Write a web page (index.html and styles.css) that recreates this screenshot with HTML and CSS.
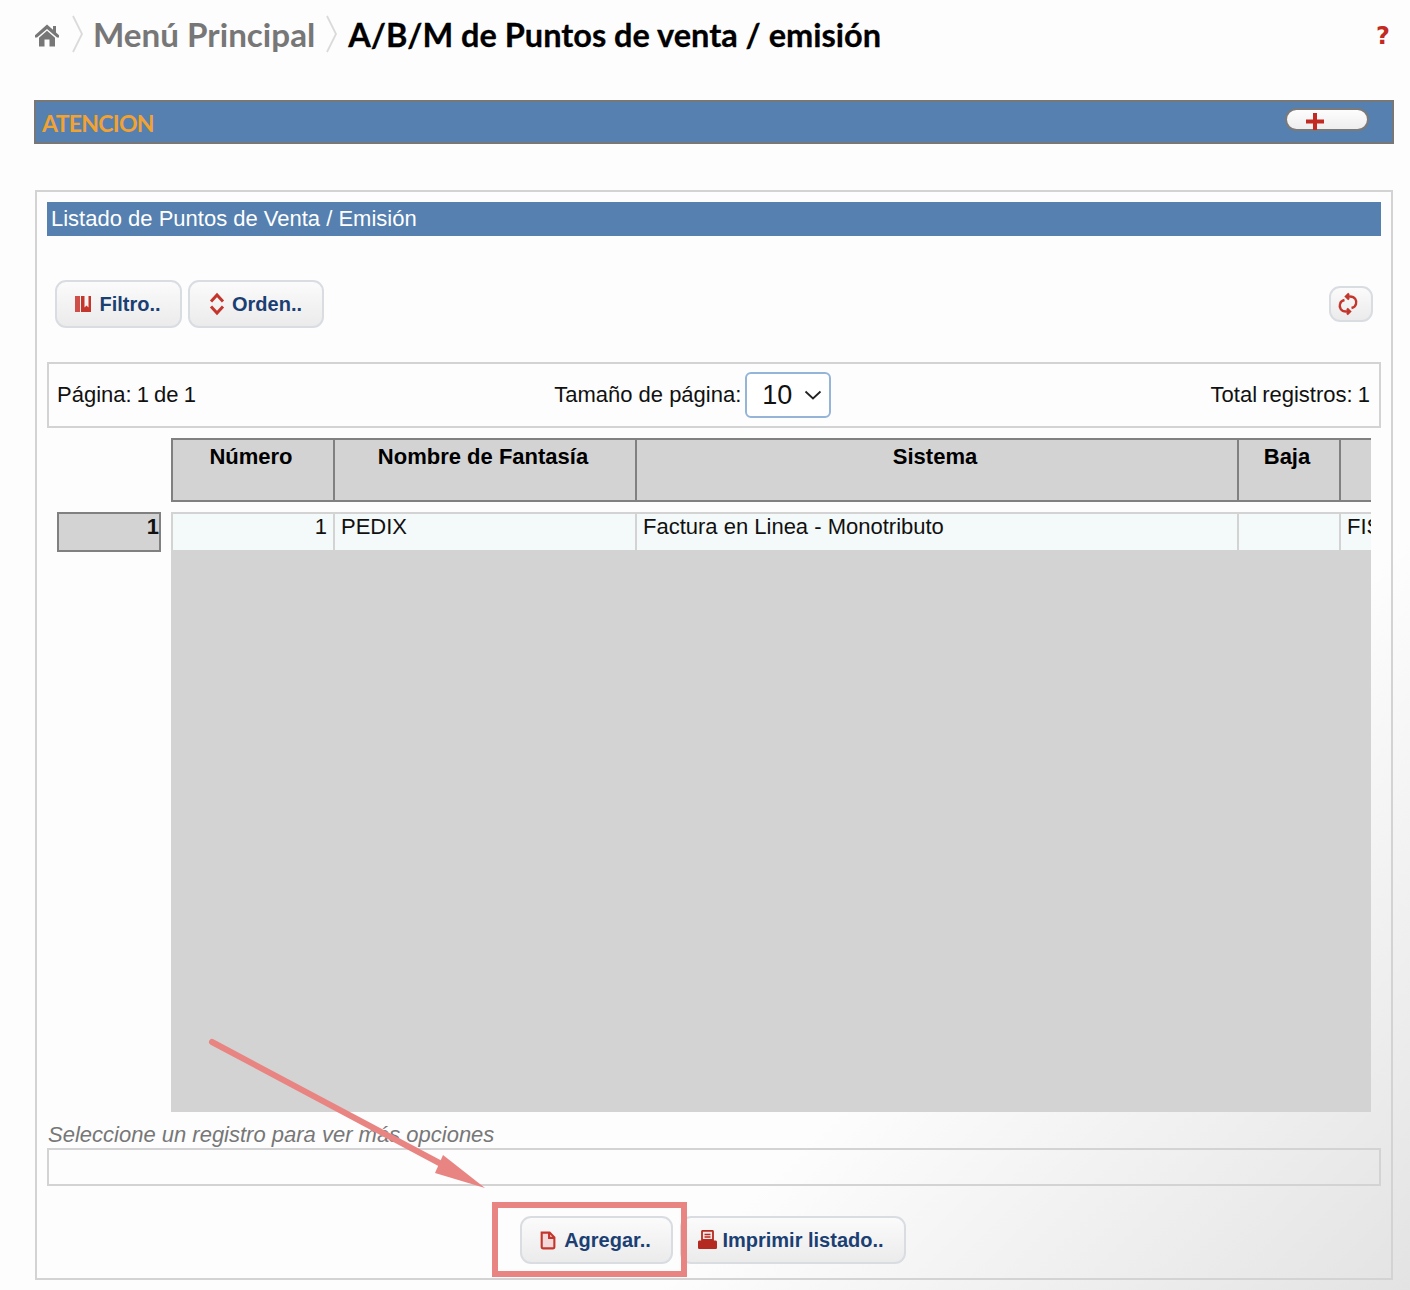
FILE: index.html
```html
<!DOCTYPE html>
<html lang="es">
<head>
<meta charset="utf-8">
<title>A/B/M de Puntos de venta / emisión</title>
<link rel="stylesheet" href="styles.css">
</head>
<body>
<div class="page">
  <header class="crumbs">
    <svg class="home" viewBox="0 0 24 23"><path d="M12 .5 18 5.800V2H21V8.500L24 11.200V13.500H22L12 5 2 13.500H0V11.200ZM4 13.800 12 6.800 20 13.800V22.500H14.500V15.500H9.500V22.500H4Z"/></svg>
    <svg class="sep" viewBox="0 0 11 38"><path d="M1 1 10 19 1 37"/></svg>
    <span class="crumb">Menú Principal</span>
    <svg class="sep" viewBox="0 0 11 38"><path d="M1 1 10 19 1 37"/></svg>
    <h1 class="title">A/B/M de Puntos de venta / emisión</h1>
    <span class="help">?</span>
  </header>

  <div class="alert">
    <span class="alert-text">ATENCION</span>
    <span class="pill"><svg class="plus" viewBox="0 0 18 17"><path d="M7 0H11V6.500H18V10.500H11V17H7V10.500H0V6.500H7Z"/></svg></span>
  </div>

  <section class="panel">
    <div class="panel-title">Listado de Puntos de Venta / Emisión</div>

    <div class="toolbar">
      <button class="btn btn-filter"><svg class="ico" viewBox="0 0 18 18"><path class="soft" d="M1 1H6V17H1Z"/><path d="M7 1H17V17H7ZM10.500 1V12.500L12.500 10.500 14.500 12.500V1Z" fill-rule="evenodd"/></svg>Filtro..</button>
      <button class="btn btn-order"><svg class="ico-line" viewBox="0 0 18 24"><path d="M3 9.500 9 3 15 9.500M3 14.500 9 21 15 14.500"/></svg>Orden..</button>
      <button class="btn btn-refresh" aria-label="Actualizar"><svg class="ico-line thin" viewBox="0 0 22 24"><path d="M12 1.500 9 4.500 12 7.500M9.500 4.500H13C18 4.500 20 8.500 19 12 18.500 14 17 15.500 14.500 16M10 22.500 13 19.500 10 16.500M12.500 19.500H9C4 19.500 2 15.500 3 12 3.500 10 5 8.500 7.500 8"/></svg></button>
    </div>

    <div class="pager">
      <span class="pager-end">Página: 1 de 1</span>
      <label class="pager-size">Tamaño de página:
        <span class="select">10<svg class="caret" viewBox="0 0 18 10"><path d="M1.500 1.500 9 8.500 16.500 1.500"/></svg></span>
      </label>
      <span class="pager-end">Total registros: 1</span>
    </div>

    <div class="grid-wrap">
      <div class="row-head-col">
        <div class="row-head">1</div>
      </div>
      <div class="grid-col">
        <div class="thead">
          <div class="th c1">Número</div>
          <div class="th c2">Nombre de Fantasía</div>
          <div class="th c3">Sistema</div>
          <div class="th c4">Baja</div>
          <div class="th c5"></div>
        </div>
        <div class="tbody">
          <div class="tr">
            <div class="td c1 num">1</div>
            <div class="td c2">PEDIX</div>
            <div class="td c3">Factura en Linea - Monotributo</div>
            <div class="td c4"></div>
            <div class="td c5">FISCAL</div>
          </div>
        </div>
      </div>
    </div>

    <p class="hint">Seleccione un registro para ver más opciones</p>
    <div class="options"></div>

    <div class="actions">
      <button class="btn btn-add"><svg class="ico-file" viewBox="0 0 16 18"><path class="file-fill" d="M2 1H10L15 6V17H2Z"/><path class="file-line" d="M2.500 1.500H10L14.500 6V15C14.500 16 14 16.500 13 16.500H4C3 16.500 2.500 16 2.500 15ZM9.500 1.500V6.500H14.500"/></svg>Agregar..</button>
      <button class="btn btn-print"><svg class="ico-print" viewBox="0 0 19 20"><path class="paper" d="M4 1.500C4 1 4.500 .8 5 .8H14C14.500 .8 15 1 15 1.500V10H4Z"/><path class="paper-line" d="M6.500 4.500H12.500M6.500 7H12.500"/><path d="M1.500 10.500H17.500C18.300 10.500 19 11 19 12V17.500C19 18.500 18.300 19 17.500 19H1.500C.7 19 0 18.500 0 17.500V12C0 11 .7 10.500 1.500 10.500Z"/></svg>Imprimir listado..</button>
    </div>
  </section>
</div>

<svg class="annotation" viewBox="0 0 1410 1290" aria-hidden="true">
  <path class="arrow-line" d="M212 1042 445 1166"/>
  <path class="arrow-head" d="M443 1155 485 1188 435 1173Z"/>
  <rect class="arrow-box" x="495" y="1205" width="189" height="69"/>
</svg>
</body>
</html>
```

FILE: styles.css
```css
* { box-sizing: border-box; }

html, body {
  margin: 0;
  height: 1290px;
  overflow: hidden;
}

body {
  position: relative;
  background: linear-gradient(135deg, #fdfdfd 72%, #e3e3e3 100%);
  font-family: "Liberation Sans", Arial, sans-serif;
  font-size: 22px;
  color: #111;
}

.page {
  padding: 0 16px 0 34px;
}

/* Breadcrumb */
.crumbs {
  display: flex;
  align-items: center;
  height: 68px;
  font-family: Lato, "Open Sans", sans-serif;
  font-weight: 700;
}

.home {
  width: 24px;
  height: 23px;
  margin: 2px 0 0 1px;
  fill: #777;
}

.sep {
  width: 11px;
  height: 40px;
  margin: 0 10px 0 13px;
  fill: none;
  stroke: #dadada;
  stroke-width: 1.800;
}

.crumb {
  font-size: 33.200px;
  color: #777;
}

.crumb + .sep {
  margin: 0 11px 0 11px;
}

.title {
  margin: 0;
  font-size: 32.500px;
  font-weight: inherit;
  color: #000;
  -webkit-text-stroke: .3px #000;
}

.help {
  margin: 4px 4px 0 auto;
  font-family: "DejaVu Sans", sans-serif;
  font-weight: 700;
  font-size: 24px;
  color: #c22a22;
}

/* Alert bar */
.alert {
  display: flex;
  align-items: flex-start;
  justify-content: space-between;
  height: 44px;
  margin-top: 32px;
  padding: 7px 23px 0 6px;
  background: #5580b0;
  border: 2px solid #777;
}

.alert-text {
  font-family: Lato, "Open Sans", sans-serif;
  font-weight: 700;
  font-size: 23px;
  letter-spacing: -.7px;
  line-height: 28px;
  color: #f2a232;
}

.pill {
  display: flex;
  justify-content: center;
  width: 84px;
  height: 23px;
  margin-top: -1px;
  padding: 3px 25px 0 0;
  border: 2px solid #7a7a7a;
  border-radius: 12px;
  background: linear-gradient(#fdfdfd, #eeeeee);
}

.plus {
  width: 18px;
  height: 17px;
  fill: #c22a22;
}

/* Panel */
.panel {
  width: 1358px;
  height: 1090px;
  margin: 46px 0 0 1px;
  padding: 10px 10px 0;
  border: 2px solid #d3d3d3;
}

.panel-title {
  height: 34px;
  padding-left: 4px;
  line-height: 34px;
  color: #fff;
  background: #5580b0;
}

/* Buttons */
.btn {
  display: inline-flex;
  align-items: center;
  justify-content: center;
  height: 48px;
  padding: 0;
  border: 2px solid #d9dde2;
  border-radius: 11px;
  background: linear-gradient(#fbfbfb, #ebebeb);
  font: 700 20px "Liberation Sans", Arial, sans-serif;
  color: #1b3f73;
}

.toolbar {
  display: flex;
  align-items: center;
  gap: 6px;
  height: 48px;
  margin: 44px 8px 0;
}

.btn-filter { width: 127px; padding-right: 2px; }
.btn-order { width: 136px; padding-right: 2px; }

.btn-refresh {
  width: 44px;
  height: 36px;
  margin-left: auto;
}

.ico {
  width: 18px;
  height: 18px;
  margin-right: 7px;
  fill: #c4362c;
}

.soft { fill: #cf5048; }

.ico-line {
  width: 18px;
  height: 24px;
  margin-right: 6px;
  fill: none;
  stroke: #c4362c;
  stroke-width: 3;
}

.ico-line.thin {
  width: 22px;
  height: 24px;
  margin: 0 6px 0 0;
  stroke-width: 2.400;
}

.ico-file {
  width: 17px;
  height: 19px;
  margin-right: 8px;
}

.file-fill { fill: #f3d9d9; }

.file-line {
  fill: none;
  stroke: #c4362c;
  stroke-width: 2;
}

.ico-print {
  width: 19px;
  height: 20px;
  margin-right: 5px;
  fill: #b52a20;
}

.paper {
  fill: #f4e6e5;
  stroke: #b52a20;
  stroke-width: 1.800;
}

.paper-line {
  fill: none;
  stroke: #b52a20;
  stroke-width: 1.500;
}

/* Pager */
.pager {
  display: flex;
  align-items: center;
  justify-content: space-between;
  height: 66px;
  margin-top: 34px;
  padding: 0 9px 0 8px;
  border: 2px solid #d3d3d3;
}

.pager-end {
  word-spacing: -1px;
}

.pager-size {
  display: flex;
  align-items: center;
  gap: 4px;
  margin-right: 21px;
}

.select {
  display: flex;
  align-items: center;
  justify-content: space-between;
  width: 86px;
  height: 46px;
  padding: 0 7px 0 15px;
  border: 2px solid #94b4d8;
  border-radius: 6px;
  background: #fff;
  font-size: 27px;
}

.caret {
  width: 18px;
  height: 10px;
  fill: none;
  stroke: #222;
  stroke-width: 1.800;
}

/* Grid */
.grid-wrap {
  display: flex;
  margin-top: 10px;
}

.row-head-col {
  width: 124px;
  padding: 74px 0 0 10px;
}

.row-head {
  width: 104px;
  height: 40px;
  border: 2px solid #808080;
  background: #d3d3d3;
  font-weight: 700;
  text-align: right;
  line-height: 25px;
}

.grid-col {
  width: 1200px;
  overflow: hidden;
}

.thead {
  display: flex;
  height: 64px;
  background: #d3d3d3;
  border-top: 2px solid #808080;
  border-bottom: 2px solid #808080;
}

.th {
  flex: none;
  padding: 4px 4px 0 0;
  border-left: 2px solid #808080;
  font-weight: 700;
  text-align: center;
  color: #000;
}

.tbody {
  height: 600px;
  margin-top: 10px;
  background: #d3d3d3;
}

.tr {
  display: flex;
  height: 38px;
  background: #f4f9fa;
  border-top: 2px solid #d3d3d3;
}

.td {
  flex: none;
  padding: 0 0 0 6px;
  border-left: 2px solid #d3d3d3;
  line-height: 26px;
  white-space: nowrap;
  overflow: hidden;
}

.td.num {
  padding-right: 6px;
  text-align: right;
}

.c1 { width: 162px; }
.c2 { width: 302px; }
.c3 { width: 602px; }
.c4 { width: 102px; }
.c5 { width: 100px; }

/* Footer */
.hint {
  height: 36px;
  margin: 0 0 0 1px;
  padding-top: 10px;
  font-style: italic;
  line-height: 26px;
  color: #777;
}

.options {
  height: 38px;
  border: 2px solid #d3d3d3;
}

.actions {
  display: flex;
  gap: 7px;
  margin: 30px 0 0 473px;
}

.btn-add { width: 153px; padding-right: 3px; }
.btn-print { width: 226px; padding-right: 4px; }

/* Annotation */
.annotation {
  position: absolute;
  left: 0;
  top: 0;
  width: 1410px;
  height: 1290px;
  pointer-events: none;
}

.arrow-line {
  fill: none;
  stroke: #e88482;
  stroke-width: 6;
  stroke-linecap: round;
}

.arrow-head { fill: #e88482; }

.arrow-box {
  fill: none;
  stroke: #e88482;
  stroke-width: 6;
}
```
